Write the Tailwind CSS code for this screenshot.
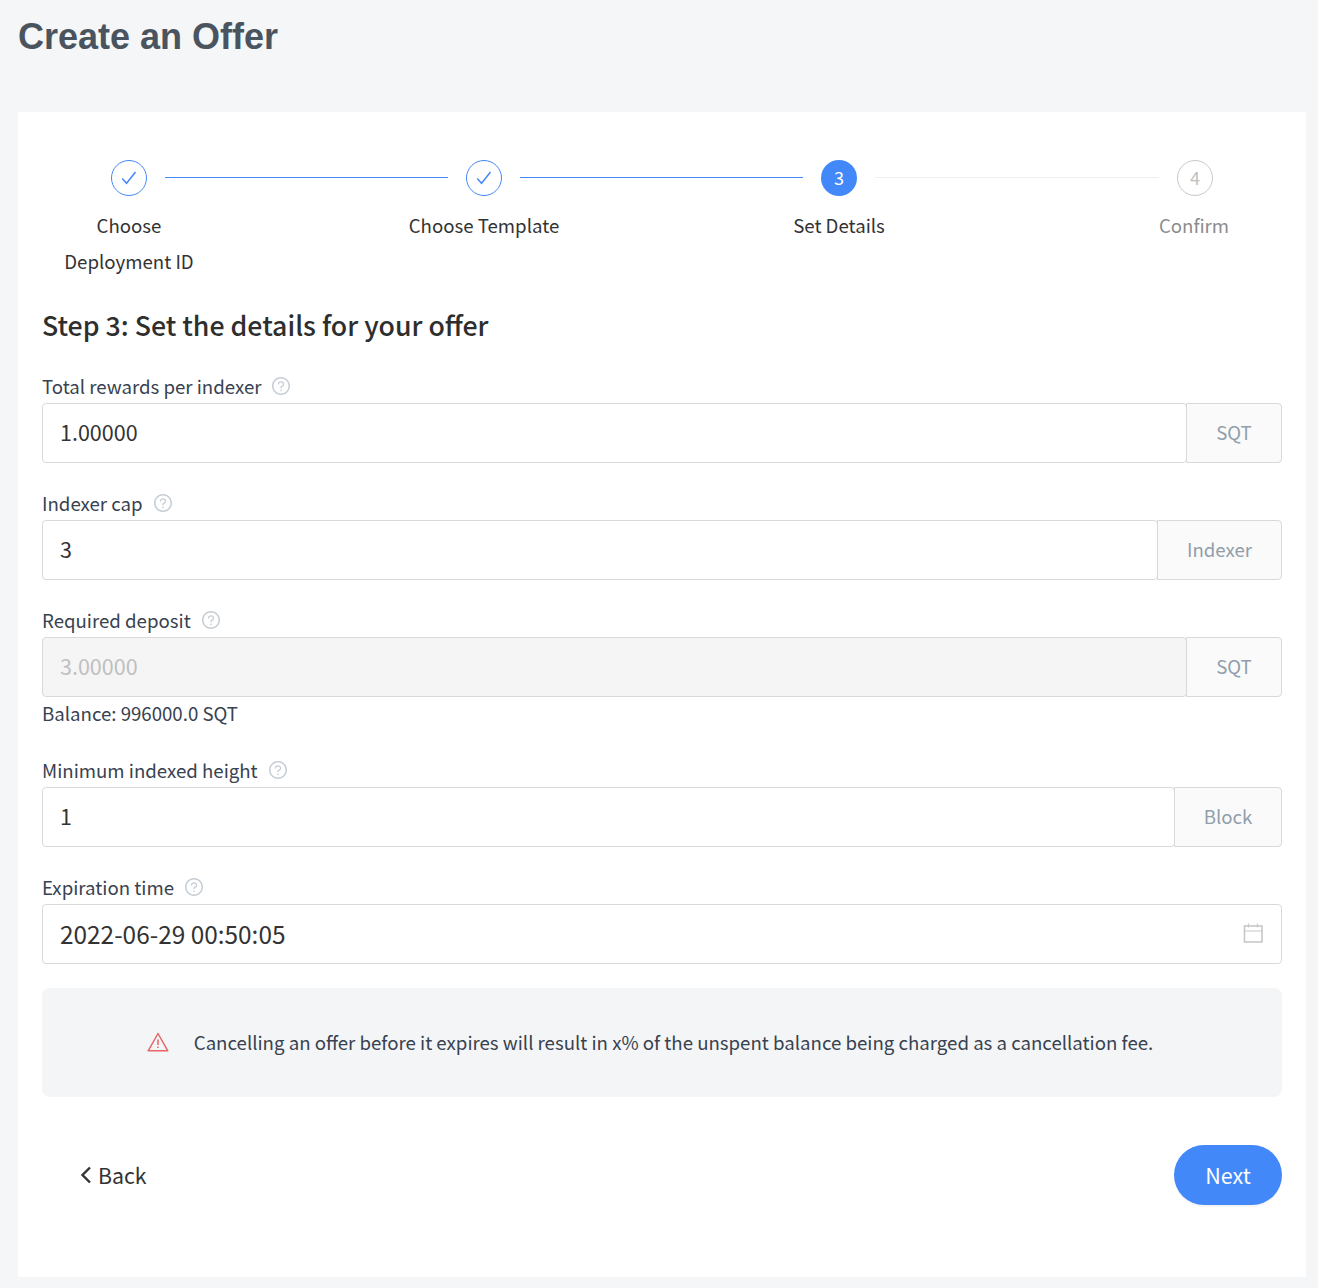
<!DOCTYPE html>
<html lang="en">
  <head>
    <meta charset="UTF-8" />
    <title>Create an Offer</title>
    <script src="https://cdn.jsdelivr.net/npm/@tailwindcss/browser@4"></script>
  </head>
  <body class="bg-[#f4f6f8] font-['Noto_Sans_CJK_SC',sans-serif] text-[#384250]">
    <h1 class="h-[112px] pl-[18px] pt-[12px] font-['Liberation_Sans',sans-serif] text-[36px] leading-[50px] font-bold text-[#4a545e]">
      Create an Offer
    </h1>

    <main class="ml-[18px] w-[1288px] h-[1165px] bg-white px-[24px] pt-[48px]">
      <!-- steps -->
      <div class="ml-[69px] w-[1102px] flex items-center">
        <span class="w-9 h-9 shrink-0 rounded-full border border-[#4388f8] flex items-center justify-center">
          <svg class="w-[18px] h-[18px]" viewBox="0 0 16 16" fill="none" stroke="#4388f8" stroke-width="1.3"><path d="M2 8.500l3.800 4.200 8-10"></path></svg>
        </span>
        <span class="w-[283px] mx-[18px] mb-[2px] h-px bg-[#4388f8]"></span>
        <span class="w-9 h-9 shrink-0 rounded-full border border-[#4388f8] flex items-center justify-center">
          <svg class="w-[18px] h-[18px]" viewBox="0 0 16 16" fill="none" stroke="#4388f8" stroke-width="1.3"><path d="M2 8.500l3.800 4.200 8-10"></path></svg>
        </span>
        <span class="w-[283px] mx-[18px] mb-[2px] h-px bg-[#4388f8]"></span>
        <span class="w-9 h-9 shrink-0 rounded-full bg-[#4388f8] text-white text-[18px] pb-[2px] flex items-center justify-center">3</span>
        <span class="w-[284px] mx-[18px] mb-[2px] h-px bg-[#f0f0f0]"></span>
        <span class="w-9 h-9 shrink-0 rounded-full border border-[#c8c8c8] text-[#bfbfbf] text-[18px] pb-[2px] flex items-center justify-center">4</span>
      </div>
      <div class="mt-[11px] flex gap-[181px] text-center text-[18.65px] leading-[36px] h-[73px] text-[#333]">
        <div class="w-[174px] shrink-0">Choose<br />Deployment ID</div>
        <div class="w-[174px] shrink-0">Choose Template</div>
        <div class="w-[174px] shrink-0">Set Details</div>
        <div class="w-[174px] shrink-0 text-[#8c8c8c]">Confirm</div>
      </div>

      <h2 class="mt-[25px] h-[40px] text-[26.7px] leading-[40px] font-medium text-[#2e2e2e]">Step 3: Set the details for your offer</h2>

      <!-- form -->
      <div class="mt-[26px]">
        <label class="h-[32px] pb-[2px] flex items-center text-[18.65px]">
          Total rewards per indexer
          <svg class="ml-[11px] w-[18px] h-[18px]" viewBox="64 64 896 896" fill="#c4cdd5"><path d="M512 64C264.6 64 64 264.6 64 512s200.6 448 448 448 448-200.6 448-448S759.4 64 512 64zm0 820c-205.4 0-372-166.6-372-372s166.6-372 372-372 372 166.6 372 372-166.6 372-372 372z"></path><path d="M623.6 316.7C593.6 290.4 554 276 512 276s-81.6 14.5-111.6 40.7C369.2 344 352 380.7 352 420v7.6c0 4.4 3.6 8 8 8h48c4.4 0 8-3.6 8-8V420c0-44.1 43.1-80 96-80s96 35.9 96 80c0 31.1-22 59.6-56.1 72.7-21.2 8.1-39.2 22.3-52.1 40.9-13.1 19-19.9 41.8-19.9 64.9V620c0 4.4 3.6 8 8 8h48c4.4 0 8-3.6 8-8v-22.7a48.3 48.3 0 0 1 30.9-44.8c59-22.7 97.1-74.7 97.1-132.5.1-39.3-17.1-76-48.3-103.3zM472 732a40 40 0 1 0 80 0 40 40 0 1 0-80 0z"></path></svg>
        </label>
        <div class="flex h-[60px]">
          <input class="flex-1 min-w-0 border border-[#d9d9d9] rounded-[4px] px-[17px] pb-[2px] text-[21.5px] text-[#333]" value="1.00000" />
          <span class="w-[96px] -ml-px border border-[#d9d9d9] rounded-r-[4px] bg-[#fafafa] pb-[2px] text-[18.65px] text-[#919eab] flex items-center justify-center">SQT</span>
        </div>
      </div>

      <div class="mt-[25px]">
        <label class="h-[32px] pb-[2px] flex items-center text-[18.65px]">
          Indexer cap
          <svg class="ml-[11px] w-[18px] h-[18px]" viewBox="64 64 896 896" fill="#c4cdd5"><path d="M512 64C264.6 64 64 264.6 64 512s200.6 448 448 448 448-200.6 448-448S759.4 64 512 64zm0 820c-205.4 0-372-166.6-372-372s166.6-372 372-372 372 166.6 372 372-166.6 372-372 372z"></path><path d="M623.6 316.7C593.6 290.4 554 276 512 276s-81.6 14.5-111.6 40.7C369.2 344 352 380.7 352 420v7.6c0 4.4 3.6 8 8 8h48c4.4 0 8-3.6 8-8V420c0-44.1 43.1-80 96-80s96 35.9 96 80c0 31.1-22 59.6-56.1 72.7-21.2 8.1-39.2 22.3-52.1 40.9-13.1 19-19.9 41.8-19.9 64.9V620c0 4.4 3.6 8 8 8h48c4.4 0 8-3.6 8-8v-22.7a48.3 48.3 0 0 1 30.9-44.8c59-22.7 97.1-74.7 97.1-132.5.1-39.3-17.1-76-48.3-103.3zM472 732a40 40 0 1 0 80 0 40 40 0 1 0-80 0z"></path></svg>
        </label>
        <div class="flex h-[60px]">
          <input class="flex-1 min-w-0 border border-[#d9d9d9] rounded-[4px] px-[17px] pb-[2px] text-[21.5px] text-[#333]" value="3" />
          <span class="w-[125px] -ml-px border border-[#d9d9d9] rounded-r-[4px] bg-[#fafafa] pb-[2px] text-[18.65px] text-[#919eab] flex items-center justify-center">Indexer</span>
        </div>
      </div>

      <div class="mt-[25px]">
        <label class="h-[32px] pb-[2px] flex items-center text-[18.65px]">
          Required deposit
          <svg class="ml-[11px] w-[18px] h-[18px]" viewBox="64 64 896 896" fill="#c4cdd5"><path d="M512 64C264.6 64 64 264.6 64 512s200.6 448 448 448 448-200.6 448-448S759.4 64 512 64zm0 820c-205.4 0-372-166.6-372-372s166.6-372 372-372 372 166.6 372 372-166.6 372-372 372z"></path><path d="M623.6 316.7C593.6 290.4 554 276 512 276s-81.6 14.5-111.6 40.7C369.2 344 352 380.7 352 420v7.6c0 4.4 3.6 8 8 8h48c4.4 0 8-3.6 8-8V420c0-44.1 43.1-80 96-80s96 35.9 96 80c0 31.1-22 59.6-56.1 72.7-21.2 8.1-39.2 22.3-52.1 40.9-13.1 19-19.9 41.8-19.9 64.9V620c0 4.4 3.6 8 8 8h48c4.4 0 8-3.6 8-8v-22.7a48.3 48.3 0 0 1 30.9-44.8c59-22.7 97.1-74.7 97.1-132.5.1-39.3-17.1-76-48.3-103.3zM472 732a40 40 0 1 0 80 0 40 40 0 1 0-80 0z"></path></svg>
        </label>
        <div class="flex h-[60px]">
          <input disabled class="flex-1 min-w-0 border border-[#d9d9d9] rounded-[4px] bg-[#f5f5f5] px-[17px] pb-[2px] text-[21.5px] text-[#bfbfbf]" value="3.00000" />
          <span class="w-[96px] -ml-px border border-[#d9d9d9] rounded-r-[4px] bg-[#fafafa] pb-[2px] text-[18.65px] text-[#919eab] flex items-center justify-center">SQT</span>
        </div>
        <p class="h-[34px] text-[18.65px] leading-[32px]">Balance: 996000.0 SQT</p>
      </div>

      <div class="mt-[24px]">
        <label class="h-[32px] pb-[2px] flex items-center text-[18.65px]">
          Minimum indexed height
          <svg class="ml-[11px] w-[18px] h-[18px]" viewBox="64 64 896 896" fill="#c4cdd5"><path d="M512 64C264.6 64 64 264.6 64 512s200.6 448 448 448 448-200.6 448-448S759.4 64 512 64zm0 820c-205.4 0-372-166.6-372-372s166.6-372 372-372 372 166.6 372 372-166.6 372-372 372z"></path><path d="M623.6 316.7C593.6 290.4 554 276 512 276s-81.6 14.5-111.6 40.7C369.2 344 352 380.7 352 420v7.6c0 4.4 3.6 8 8 8h48c4.4 0 8-3.6 8-8V420c0-44.1 43.1-80 96-80s96 35.9 96 80c0 31.1-22 59.6-56.1 72.7-21.2 8.1-39.2 22.3-52.1 40.9-13.1 19-19.9 41.8-19.9 64.9V620c0 4.4 3.6 8 8 8h48c4.4 0 8-3.6 8-8v-22.7a48.3 48.3 0 0 1 30.9-44.8c59-22.7 97.1-74.7 97.1-132.5.1-39.3-17.1-76-48.3-103.3zM472 732a40 40 0 1 0 80 0 40 40 0 1 0-80 0z"></path></svg>
        </label>
        <div class="flex h-[60px]">
          <input class="flex-1 min-w-0 border border-[#d9d9d9] rounded-[4px] px-[17px] pb-[2px] text-[21.5px] text-[#333]" value="1" />
          <span class="w-[108px] -ml-px border border-[#d9d9d9] rounded-r-[4px] bg-[#fafafa] pb-[2px] text-[18.65px] text-[#919eab] flex items-center justify-center">Block</span>
        </div>
      </div>

      <div class="mt-[25px]">
        <label class="h-[32px] pb-[2px] flex items-center text-[18.65px]">
          Expiration time
          <svg class="ml-[11px] w-[18px] h-[18px]" viewBox="64 64 896 896" fill="#c4cdd5"><path d="M512 64C264.6 64 64 264.6 64 512s200.6 448 448 448 448-200.6 448-448S759.4 64 512 64zm0 820c-205.4 0-372-166.6-372-372s166.6-372 372-372 372 166.6 372 372-166.6 372-372 372z"></path><path d="M623.6 316.7C593.6 290.4 554 276 512 276s-81.6 14.5-111.6 40.7C369.2 344 352 380.7 352 420v7.6c0 4.4 3.6 8 8 8h48c4.4 0 8-3.6 8-8V420c0-44.1 43.1-80 96-80s96 35.9 96 80c0 31.1-22 59.6-56.1 72.7-21.2 8.1-39.2 22.3-52.1 40.9-13.1 19-19.9 41.8-19.9 64.9V620c0 4.4 3.6 8 8 8h48c4.4 0 8-3.6 8-8v-22.7a48.3 48.3 0 0 1 30.9-44.8c59-22.7 97.1-74.7 97.1-132.5.1-39.3-17.1-76-48.3-103.3zM472 732a40 40 0 1 0 80 0 40 40 0 1 0-80 0z"></path></svg>
        </label>
        <div class="h-[60px] flex items-center border border-[#d9d9d9] rounded-[4px] pl-[17px] pr-[18px]">
          <input class="flex-1 min-w-0 text-[24.4px] text-[#333]" value="2022-06-29 00:50:05" />
          <svg class="w-[20px] h-[20px] mb-[2px]" viewBox="0 0 20 20" fill="none" stroke="#c8c8c8" stroke-width="1.6"><rect x="1.500" y="3" width="17.500" height="16"></rect><path d="M1 8h18M5.500 0.500v4M14.500 0.500v4" stroke-width="1.2"></path></svg>
        </div>
      </div>

      <!-- alert -->
      <div class="mt-[24px] h-[109px] bg-[#f4f5f7] rounded-[8px] pr-[24px] pb-[2px] flex items-center justify-center text-[18.65px]">
        <svg class="w-[22px] h-[20px] mr-[25px]" viewBox="0 0 22 20" fill="none" stroke="#e56767" stroke-width="1.5"><path d="M11 1.500L1.200 18.800h19.600z" stroke-linejoin="round"></path><path d="M11 7.500v5.500M11 14.500v1.600"></path></svg>
        Cancelling an offer before it expires will result in x% of the unspent balance being charged as a cancellation fee.
      </div>

      <!-- actions -->
      <div class="mt-[48px] flex items-center justify-between">
        <button class="ml-[38px] flex items-center text-[21.3px] text-[#333]">
          <svg class="w-[12px] h-[18px] mr-[6px]" viewBox="0 0 12 18" fill="none" stroke="#333" stroke-width="2.400"><path d="M10 1.500L2.500 9l7.500 7.500"></path></svg>
          Back
        </button>
        <button class="w-[108px] h-[60px] rounded-full bg-[#4388f8] text-white text-[21.5px] shadow-[0_2px_0_rgba(0,0,0,0.045)]">Next</button>
      </div>
    </main>
  </body>
</html>
